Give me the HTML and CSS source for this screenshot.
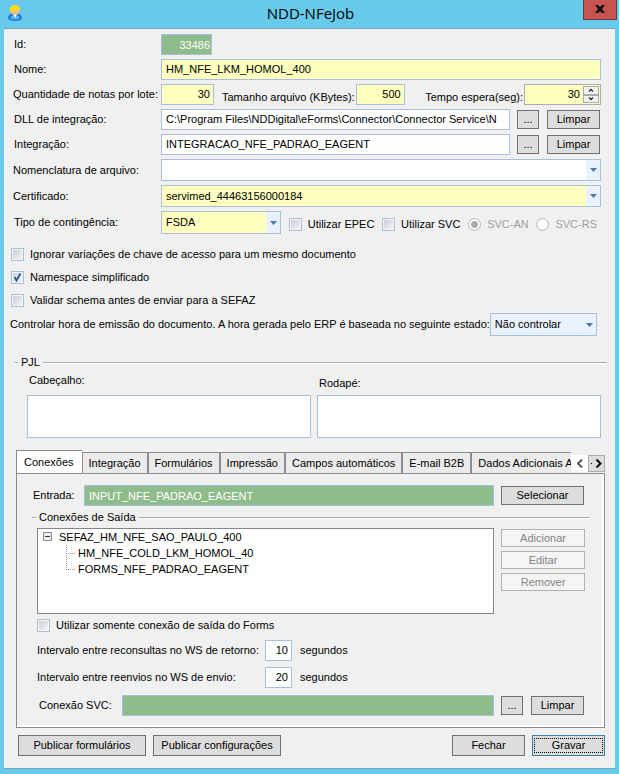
FILE: index.html
```html
<!DOCTYPE html>
<html lang="pt-BR">
<head>
    <meta charset="UTF-8">
    <meta name="viewport" content="width=device-width, initial-scale=1.0">
    <title>NDD-NFeJob</title>
    <link rel="stylesheet" href="styles.css">
</head>
<body>
    <header class="titlebar">
        <svg class="app-icon" width="14" height="17" viewBox="0 0 14 17" aria-hidden="true">
            <path d="M0 13c0-3 3-5 7-5s7 2 7 5c0 4-14 4-14 0z" fill="#1f78d8"/>
            <path d="M2 13c1-2 3-3 5-3s4 1 5 3c-2 2-8 2-10 0z" fill="#4fb4f4"/>
            <path d="M5 9h4l-2 4z" fill="#fff"/>
            <circle cx="7" cy="6" r="4" fill="#f5c083"/>
            <path d="M2 7C1 2 4 0 7 0s6 2 5 6c-3-2-6-1-10 1z" fill="#ffdc18"/>
        </svg>
        <h1>NDD-NFeJob</h1>
        <button class="close" type="button" aria-label="Fechar janela">
            <svg width="10" height="8" viewBox="0 0 10 8"><path d="M0 0h3l2 2 2-2h3L7 4l3 4H7L5 6 3 8H0l3-4z" fill="#111"/></svg>
        </button>
    </header>

    <form class="window">
        <div class="fields">
            <label for="id">Id:</label>
            <div class="line"><input class="locked num id" id="id" value="33486" readonly></div>

            <label for="nome">Nome:</label>
            <div class="line"><input class="required grow" id="nome" value="HM_NFE_LKM_HOMOL_400"></div>

            <label class="wide" for="qtd">Quantidade de notas por lote:</label>
            <div class="line amounts">
                <input class="required num qtd" id="qtd" value="30">
                <span class="pair">
                    <label for="tamanho">Tamanho arquivo (KBytes):</label>
                    <input class="required num tamanho" id="tamanho" value="500">
                </span>
                <span class="pair wait">
                    <label for="tempo">Tempo espera(seg):</label>
                    <span class="spinner">
                        <input class="num" id="tempo" value="30">
                        <span class="arrows">
                            <button type="button" aria-label="Aumentar"><svg width="6" height="4" viewBox="0 0 6 4"><path d="M1 3.5l2-2 2 2" fill="none" stroke="#333" stroke-width="1.4"/></svg></button>
                            <button type="button" aria-label="Diminuir"><svg width="6" height="4" viewBox="0 0 6 4"><path d="M1 .5l2 2 2-2" fill="none" stroke="#333" stroke-width="1.4"/></svg></button>
                        </span>
                    </span>
                </span>
            </div>

            <label for="dll">DLL de integração:</label>
            <div class="line buttons">
                <input class="grow" id="dll" value="C:\Program Files\NDDigital\eForms\Connector\Connector Service\N">
                <button class="btn dots" type="button">...</button>
                <button class="btn clear" type="button">Limpar</button>
            </div>

            <label for="integracao">Integração:</label>
            <div class="line buttons">
                <input class="grow" id="integracao" value="INTEGRACAO_NFE_PADRAO_EAGENT">
                <button class="btn dots" type="button">...</button>
                <button class="btn clear" type="button">Limpar</button>
            </div>

            <label class="wide" for="nomenclatura">Nomenclatura de arquivo:</label>
            <select id="nomenclatura"><option></option></select>

            <label class="wide" for="certificado">Certificado:</label>
            <select class="required" id="certificado"><option>servimed_44463156000184</option></select>

            <label for="contingencia">Tipo de contingência:</label>
            <div class="line options">
                <select class="required tipo" id="contingencia"><option>FSDA</option></select>
                <label class="check"><input type="checkbox"> Utilizar EPEC</label>
                <label class="check"><input type="checkbox"> Utilizar SVC</label>
                <label class="check off"><input type="radio" name="svc" checked disabled> SVC-AN</label>
                <label class="check off"><input type="radio" name="svc" disabled> SVC-RS</label>
            </div>
        </div>

        <div class="checks">
            <label class="check"><input type="checkbox"> Ignorar variações de chave de acesso para um mesmo documento</label>
            <label class="check"><input type="checkbox" checked> Namespace simplificado</label>
            <label class="check"><input type="checkbox"> Validar schema antes de enviar para a SEFAZ</label>
        </div>

        <div class="control">
            <label for="hora">Controlar hora de emissão do documento. A hora gerada pelo ERP é baseada no seguinte estado:</label>
            <select class="plain" id="hora"><option>Não controlar</option></select>
        </div>

        <fieldset class="pjl">
            <legend>PJL</legend>
            <div class="areas">
                <label for="cabecalho">Cabeçalho:</label>
                <label class="low" for="rodape">Rodapé:</label>
                <textarea id="cabecalho"></textarea>
                <textarea id="rodape"></textarea>
            </div>
        </fieldset>

        <div class="tabs">
            <div class="tab-list" role="tablist">
                <button class="tab active" type="button" role="tab" aria-selected="true">Conexões</button>
                <button class="tab" type="button" role="tab">Integração</button>
                <button class="tab" type="button" role="tab">Formulários</button>
                <button class="tab" type="button" role="tab">Impressão</button>
                <button class="tab" type="button" role="tab">Campos automáticos</button>
                <button class="tab" type="button" role="tab">E-mail B2B</button>
                <button class="tab" type="button" role="tab">Dados Adicionais A</button>
            </div>
            <button class="scroll prev" type="button" aria-label="Anterior"><svg width="6" height="9" viewBox="0 0 6 9"><path d="M5 .5l-4 4 4 4" fill="none" stroke="#555" stroke-width="2"/></svg></button>
            <button class="scroll" type="button" aria-label="Próximo"><svg width="11" height="9" viewBox="0 0 11 9"><path d="M0 4h1v1H0z"/><path d="M5.500 .5l4 4-4 4" fill="none" stroke="#000" stroke-width="2"/></svg></button>
        </div>

        <div class="panel">
            <div class="entry">
                <label for="entrada">Entrada:</label>
                <input class="locked grow" id="entrada" value="INPUT_NFE_PADRAO_EAGENT" readonly>
                <button class="btn select" type="button">Selecionar</button>
            </div>

            <fieldset class="output">
                <legend>Conexões de Saída</legend>
                <div class="output-body">
                    <ul class="tree">
                        <li><svg class="minus" width="9" height="9" viewBox="0 0 9 9"><path d="M.5.5h8v8h-8z" fill="#eee" stroke="#888"/><path d="M2 4h5v1H2z" fill="#333"/></svg>SEFAZ_HM_NFE_SAO_PAULO_400
                            <ul>
                                <li>HM_NFE_COLD_LKM_HOMOL_40</li>
                                <li>FORMS_NFE_PADRAO_EAGENT</li>
                            </ul>
                        </li>
                    </ul>
                    <div class="stack">
                        <button class="btn" type="button" disabled>Adicionar</button>
                        <button class="btn" type="button" disabled>Editar</button>
                        <button class="btn" type="button" disabled>Remover</button>
                    </div>
                </div>
            </fieldset>

            <label class="check forms"><input type="checkbox"> Utilizar somente conexão de saída do Forms</label>

            <div class="intervals">
                <label for="retorno">Intervalo entre reconsultas no WS de retorno:</label>
                <input class="num" id="retorno" value="10">
                <span>segundos</span>
                <label for="envio">Intervalo entre reenvios no WS de envio:</label>
                <input class="num" id="envio" value="20">
                <span>segundos</span>
            </div>

            <div class="svc">
                <label for="svc">Conexão SVC:</label>
                <input class="locked grow" id="svc" readonly>
                <button class="btn dots" type="button">...</button>
                <button class="btn clear" type="button">Limpar</button>
            </div>
        </div>

        <footer class="actions">
            <button class="btn publish" type="button">Publicar formulários</button>
            <button class="btn publish" type="button">Publicar configurações</button>
            <button class="btn end" type="button">Fechar</button>
            <button class="btn end default" type="submit"><span>Gravar</span></button>
        </footer>
    </form>
</body>
</html>
```
FILE: styles.css
```css
* {
    box-sizing: border-box;
}

body {
    margin: 0;
    padding: 0 4px 5px;
    background-color: #67caeb;
    color: #000;
    font: 11px/13px "Liberation Sans", Arial, sans-serif;
}

input, select, textarea, button {
    margin: 0;
    font: inherit;
    color: inherit;
    border-radius: 0;
}

label, legend, button {
    white-space: nowrap;
}

/* Title bar */
.titlebar {
    display: grid;
    grid-template-columns: 34px 1fr 34px;
    height: 28px;
    margin-right: -2px;
}

.app-icon {
    margin: 5px 0 0 4px;
}

h1 {
    margin: 0;
    font: 15px/27px "Open Sans", "Noto Sans", sans-serif;
    text-align: center;
}

.close {
    display: flex;
    align-items: center;
    justify-content: center;
    height: 20px;
    padding: 0 0 2px;
    border: 1px solid #6f3a38;
    border-top: 0;
    background-color: #c75450;
}

.window {
    padding: 5px 10px 12px 9px;
    border-top: 1px solid #72a5bf;
    border-bottom: 1px solid #72a5bf;
    background-color: #f0f0f0;
}

/* Inputs */
input, select, textarea {
    height: 21px;
    padding: 0 4px;
    border: 1px solid #a9bfde;
    background-color: #fff;
    outline: 0;
}

/* text boxes keep their text slightly above the middle */
input {
    padding-bottom: 2px;
}

select {
    appearance: none;
    height: 22px;
    background-image: url("data:image/svg+xml,%3Csvg xmlns='http://www.w3.org/2000/svg' width='7' height='4'%3E%3Cpath d='M0 0h7L3.500 4z' fill='%234a78b5'/%3E%3C/svg%3E"), linear-gradient(#e8f1fc, #e8f1fc);
    background-repeat: no-repeat;
    background-position: right 3px center, right center;
    background-size: 7px 4px, 14px 100%;
}

textarea {
    display: block;
    width: 100%;
    height: 43px;
    resize: none;
}

.required {
    background-color: #ffffc0;
}

.locked {
    background-color: #8fbc8b;
    color: #fff;
}

.num {
    padding: 0 3px 2px;
    text-align: right;
}

.id {
    padding: 0 1px;
}

.grow {
    flex: 1;
    min-width: 0;
}

.check {
    display: flex;
    align-items: center;
    gap: 6px;
}

.check input {
    appearance: none;
    flex: none;
    width: 13px;
    height: 13px;
    padding: 0;
    box-shadow: inset 0 0 0 1px #f4f4f4;
    background: linear-gradient(135deg, #c4c8d0, #fafafa);
}

.check input[type="checkbox"]:checked {
    background: url("data:image/svg+xml,%3Csvg xmlns='http://www.w3.org/2000/svg' width='11' height='11'%3E%3Cpath d='M2.500 5l2 3.500 4-7' fill='none' stroke='%23365f91' stroke-width='2'/%3E%3C/svg%3E") center no-repeat, linear-gradient(135deg, #c4d0e0, #fafafa);
}

.check input[type="radio"] {
    border-color: #bbb;
    border-radius: 50%;
    background: #fff;
}

.check input[type="radio"]:checked {
    background: radial-gradient(circle, #aaa 3px, #fff 4px);
}

.off {
    color: #a0a0a0;
}

.btn {
    height: 19px;
    padding: 0;
    border: 1px solid #707070;
    background-color: #ddd;
    text-align: center;
}

.btn:disabled {
    border-color: #adb2b5;
    background-color: #f4f4f4;
    color: #838383;
}

.dots {
    width: 22px;
}

.clear {
    width: 53px;
}

/* Main fields */
.fields {
    display: grid;
    grid-template-columns: 148px 1fr;
    gap: 4px 0;
    align-items: center;
    padding-right: 4px;
}

.fields > label {
    padding-left: 1px;
}

.fields > .wide {
    padding-left: 0;
}

.line, .pair {
    display: flex;
    align-items: center;
}

.amounts {
    gap: 8px;
}

.amounts label {
    padding-top: 5px;
}

.pair {
    gap: 1px;
}

.wait {
    margin-left: auto;
}

.id {
    width: 51px;
}

.qtd {
    width: 53px;
}

.tamanho {
    width: 49px;
}

.spinner {
    display: flex;
    width: 77px;
    height: 21px;
    padding: 1px;
    border: 1px solid #abadb3;
    background-color: #ffffc0;
}

.spinner input {
    flex: 1;
    min-width: 0;
    height: 17px;
    border: 0;
    background: none;
}

.arrows {
    display: grid;
    width: 16px;
}

.arrows button {
    display: flex;
    align-items: center;
    justify-content: center;
    padding: 0;
    border: 1px solid #acacac;
    background-color: #f0f0f0;
}

.buttons {
    padding-right: 1px;
}

.buttons .dots {
    margin: 0 8px 0 7px;
}

.options {
    justify-content: space-between;
    padding-right: 4px;
}

.options .check {
    padding-top: 3px;
}

.tipo {
    width: 120px;
    height: 23px;
}

.checks {
    display: grid;
    gap: 10px;
    justify-items: start;
    margin: 14px 0 6px -2px;
}

.control {
    display: flex;
    align-items: center;
    justify-content: space-between;
    margin-left: -3px;
    padding-right: 8px;
}

.plain {
    width: 113px;
    height: 23px;
    background-color: #e8f1fc;
}

/* Group boxes */
fieldset {
    min-width: 0;
    margin: 0;
    padding: 0;
    border: 0;
    border-top: 2px groove #fff;
}

legend {
    margin-left: 4px;
    padding: 0 3px;
}

.pjl {
    margin: 20px -2px 12px 1px;
    padding: 0 6px 0 13px;
}

.pjl legend {
    margin-left: -9px;
}

.areas {
    display: grid;
    grid-template-columns: 1fr 1fr;
    column-gap: 6px;
    padding-top: 5px;
}

.areas label {
    height: 21px;
    padding-left: 2px;
}

.areas .low {
    padding-top: 3px;
}

/* Tabs */
.tabs {
    display: flex;
    align-items: flex-end;
    margin-left: 3px;
}

.tab-list {
    display: flex;
    flex: 1;
    align-items: flex-end;
    min-width: 0;
    overflow: hidden;
}

.tab {
    flex: none;
    height: 21px;
    padding: 0 6px;
    border: 1px solid #898c95;
    border-bottom: 0;
    background-color: #ebebeb;
}

.tab.active {
    height: 23px;
    padding: 0 8px 0 7px;
    border-right: 0;
    background-color: #fff;
}

.scroll {
    display: flex;
    align-items: center;
    justify-content: center;
    width: 17px;
    height: 17px;
    margin-bottom: 1px;
    padding: 0;
    border: 1px solid #acacac;
    background-color: #ddd;
}

.prev {
    border-color: #fff;
    background-color: #fff;
}

.panel {
    margin-left: 3px;
    padding: 11px 14px 11px 15px;
    border: 1px solid #898c95;
    box-shadow: inset -2px -2px #fff;
}

.entry, .svc {
    display: flex;
    align-items: center;
    padding-right: 6px;
}

.entry {
    padding-left: 1px;
}

.entry label {
    width: 51px;
}

.entry .locked {
    padding-bottom: 0;
}

.select {
    width: 83px;
    margin-left: 7px;
}

.output {
    margin-top: 5px;
}

.output-body {
    display: flex;
    gap: 7px;
    padding: 4px 5px 0;
}

.tree, .tree ul {
    margin: 0;
    padding: 0;
    list-style: none;
}

.tree {
    flex: 1;
    height: 86px;
    padding: 0 5px;
    border: 1px solid #828790;
    background-color: #fff;
    line-height: 16px;
}

.minus {
    margin-right: 7px;
}

.tree ul {
    margin-left: 23px;
}

/* dotted connectors between the nodes */
.tree ul li {
    display: flex;
    background: repeating-linear-gradient(#999 0 1px, transparent 1px 2px) 0 0 / 1px 100% no-repeat;
}

.tree ul li:last-child {
    background-size: 1px 8px;
}

.tree ul li::before {
    content: "";
    width: 9px;
    height: 8px;
    margin-right: 3px;
    border-bottom: 1px dotted #999;
}

.stack {
    display: grid;
    gap: 4px;
    align-content: start;
    width: 84px;
    padding-top: 1px;
}

.stack .btn {
    height: 18px;
}

.forms {
    margin: 5px 0 8px 5px;
}

.intervals {
    display: grid;
    grid-template-columns: 228px 27px auto;
    align-items: center;
    row-gap: 6px;
    padding-left: 5px;
}

.intervals span {
    padding-left: 8px;
}

.svc {
    margin-top: 7px;
    padding-left: 7px;
}

.svc label {
    width: 83px;
}

.svc .dots {
    margin: 0 8px 0 7px;
}

/* Bottom buttons */
.actions {
    display: flex;
    gap: 7px;
    margin-top: 7px;
    padding-left: 5px;
}

.actions .btn {
    height: 21px;
}

.publish {
    width: 128px;
}

.end {
    width: 73px;
}

.publish + .end {
    margin-left: auto;
}

.default {
    border-color: #3c7fb1;
}

.actions .default {
    padding: 1px;
}

.default span {
    display: block;
    border: 1px dotted #000;
}
```
